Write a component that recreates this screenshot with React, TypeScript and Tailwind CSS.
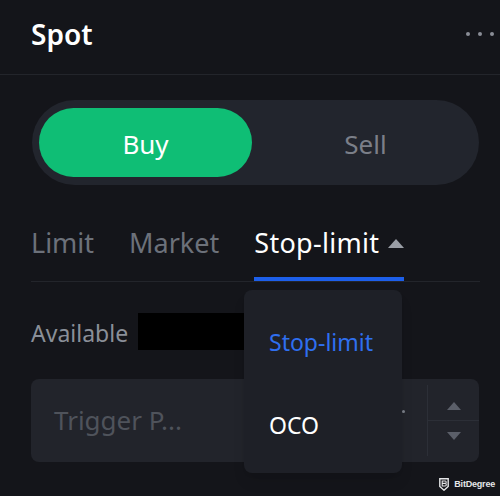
import { useState } from "react";

const font = { fontFamily: '"Noto Sans", "Open Sans", sans-serif' };

function Stepper() {
  return (
    <div className="flex h-full w-[52px] flex-col border-l border-[#2c2f37]">
      <button type="button" className="flex flex-1 items-end justify-center pb-[10px] border-b border-[#2c2f37]">
        <svg width="14" height="8" viewBox="0 0 14 8">
          <path d="M7 0 L14 8 L0 8 Z" fill="#5b5f69" />
        </svg>
      </button>
      <button type="button" className="flex flex-1 items-start justify-center pt-[11px]">
        <svg width="14" height="8" viewBox="0 0 14 8">
          <path d="M0 0 L14 0 L7 8 Z" fill="#5b5f69" />
        </svg>
      </button>
    </div>
  );
}

export default function App() {
  const [side, setSide] = useState<"buy" | "sell">("buy");
  const tabs = ["Limit", "Market", "Stop-limit"];

  return (
    <div
      className="relative h-[496px] w-[500px] overflow-hidden bg-[#14151a] text-white"
      style={font}
    >
      {/* header */}
      <div className="flex h-[75px] items-center justify-between border-b border-[#23252b] pl-[31px] pr-[6px] pb-[6px]">
        <h1 className="text-[28px] font-semibold leading-none">Spot</h1>
        <div className="flex gap-[8px]">
          <span className="h-[4px] w-[4px] rounded-full bg-[#8a8d96]" />
          <span className="h-[4px] w-[4px] rounded-full bg-[#8a8d96]" />
          <span className="h-[4px] w-[4px] rounded-full bg-[#8a8d96]" />
        </div>
      </div>

      {/* buy / sell */}
      <div className="ml-[32px] mr-[21px] mt-[25px] grid h-[85px] grid-cols-[213px_1fr] rounded-full bg-[#22252d] p-[8px] pl-[7px]">
        <button
          type="button"
          onClick={() => setSide("buy")}
          className={`rounded-full pt-[3px] text-[26px] ${side === "buy" ? "bg-[#0fbe75] text-white" : "text-[#7b7f88]"}`}
        >
          Buy
        </button>
        <button
          type="button"
          onClick={() => setSide("sell")}
          className={`rounded-full pl-[8px] pt-[3px] text-[26px] ${side === "sell" ? "bg-[#f6465d] text-white" : "text-[#7b7f88]"}`}
        >
          Sell
        </button>
      </div>

      {/* order type tabs */}
      <div className="ml-[31px] mr-[20px] mt-[38px] flex h-[59px] items-start gap-[35px] border-b border-[#23252b]">
        {tabs.map((t) =>
          t === "Stop-limit" ? (
            <div key={t} className="flex h-full items-start gap-[9px] border-b-[4px] border-[#1d5fea]">
              <span className="text-[27px] leading-[40px] tracking-[0.3px] text-white">{t}</span>
              <svg width="16" height="9" viewBox="0 0 16 9" className="mt-[16px]">
                <path d="M8 0 L16 9 L0 9 Z" fill="#9a9ea6" />
              </svg>
            </div>
          ) : (
            <span key={t} className="text-[27px] leading-[40px] text-[#6c717a]">
              {t}
            </span>
          )
        )}
      </div>

      {/* available */}
      <div className="mx-[31px] mt-[31px] flex h-[37px] items-center">
        <span className="mt-[3px] text-[23px] text-[#8a8f98]">Available</span>
        <div className="ml-[10px] h-[37px] w-[107px] bg-black" />
      </div>

      {/* trigger price input */}
      <div className="ml-[31px] mr-[21px] mt-[29px] flex h-[83px] items-center rounded-[8px] bg-[#22242b] pl-[23px]">
        <span className="text-[26px] text-[#4f535b]">Trigger P...</span>
        <span className="ml-auto mr-[22px] mb-[18px] h-[3px] w-[3px] rounded-full bg-[#7b7f88]" />
        <div className="h-full py-[6px]">
          <Stepper />
        </div>
      </div>

      {/* dropdown */}
      <div className="absolute left-[244px] top-[290px] h-[183px] w-[158px] rounded-[8px] bg-[#1e2027] shadow-lg">
        <div className="flex h-[104px] items-center pl-[25px] text-[23px] text-[#2f6ff0]">Stop-limit</div>
        <div className="flex h-[62px] items-center pl-[25px] text-[23px] text-white">OCO</div>
      </div>

      {/* watermark */}
      <div className="absolute bottom-[5px] right-[5px] flex items-center gap-[5px] text-[#e5e6e8]">
        <svg width="10" height="13" viewBox="0 0 10 13">
          <path d="M0.8 0.8 H9.2 V8.5 L5 12.2 L0.8 8.5 Z" fill="none" stroke="#e5e6e8" strokeWidth="1.4" />
          <path d="M3.2 3 H6.3 Q7.2 3 7.2 4.2 Q7.2 5.2 6.2 5.4 Q7.3 5.6 7.3 6.8 Q7.3 8 6.2 8 H3.2 Z M3.2 5.4 H6" fill="none" stroke="#e5e6e8" strokeWidth="1.1" />
        </svg>
        <span className="text-[9px] font-bold leading-none tracking-[-0.2px]" style={{ fontFamily: '"Liberation Sans", Arial, sans-serif' }}>
          BitDegree
        </span>
      </div>
    </div>
  );
}
